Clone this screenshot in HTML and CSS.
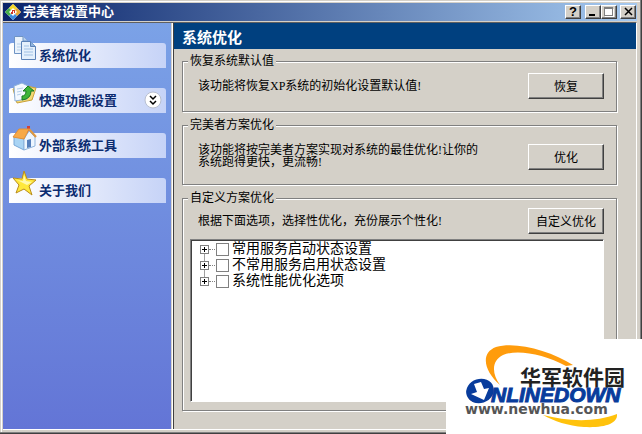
FILE: index.html
```html
<!DOCTYPE html>
<html lang="zh-CN">
<head>
  <meta charset="UTF-8">
  <meta name="viewport" content="width=device-width, initial-scale=1.0">
  <title>完美者设置中心</title>
  <link rel="stylesheet" href="styles.css">
</head>
<body>
  <div class="window">
    <header class="titlebar">
      <svg class="app-icon" width="16" height="16" viewBox="0 0 16 16">
        <path d="M8 0L16 8L8 16L0 8Z" fill="#fff"/>
        <path d="M8 0L12 4L10 6L8 4L6 6L4 4Z" fill="#f4d828"/>
        <path d="M12 4L16 8L12 12L10 10L12 8L10 6Z" fill="#e8a838"/>
        <path d="M4 12L6 10L8 12L10 10L12 12L8 16Z" fill="#3c8ce0"/>
        <path d="M4 4L6 6L4 8L6 10L4 12L0 8Z" fill="#48b048"/>
        <path d="M8 5L11 8L8 11L5 8Z" fill="#fff"/>
        <path d="M7 6h3v3h-1v-2h-1v3h-2v-2h1z" fill="#d03828"/>
      </svg>
      <h1>完美者设置中心</h1>
      <div class="window-buttons">
        <button type="button" class="help" aria-label="帮助">?</button>
        <button type="button" aria-label="最小化"><svg width="11" height="10" viewBox="0 0 11 10"><path d="M2 7h6v2h-6z"/></svg></button>
        <button type="button" aria-label="最大化"><svg width="11" height="10" viewBox="0 0 11 10"><path d="M2 2h9v8h-9z" fill="#fff"/><path d="M1 0h9v9h-9zM2 2v6h7v-6z" fill="#808080" fill-rule="evenodd"/></svg></button>
        <button type="button" class="close" aria-label="关闭"><svg width="11" height="10" viewBox="0 0 11 10"><path d="M3 1L10 8M10 1L3 8" stroke="#000" stroke-width="1.500"/></svg></button>
      </div>
    </header>

    <div class="content">
      <nav class="sidebar">
        <a href="#optimize">
          <svg class="icon" width="26" height="26" viewBox="0 0 26 26">
            <path d="M2.500 1.500H11L15.500 6V18.500H2.500Z" fill="#eaf3fc" stroke="#6f94c4"/>
            <path d="M11 1.500V6H15.500" fill="#b9d2ee" stroke="#6f94c4"/>
            <path d="M5 9h6M5 12h5M5 15h5" stroke="#b5cfea"/>
            <path d="M9.500 6.500H18.500L23.500 11.500V24.500H9.500Z" fill="#e4f0fc" stroke="#5b82b8"/>
            <path d="M18.500 6.500V11.500H23.500" fill="#8fb4de" stroke="#5b82b8"/>
            <path d="M12 11h5M12 14h9M12 17h9M12 20h9" stroke="#9fc0e4"/>
          </svg>
          <span>系统优化</span>
        </a>
        <a href="#quick">
          <svg class="icon" width="26" height="26" viewBox="0 0 26 26">
            <path d="M1 9L10 5L24 8L20 20L5 23Z" fill="#f3d874" stroke="#c9a23c"/>
            <path d="M2 6L10 3L16 6L15 19L3 21Z" fill="#f4f9ff" stroke="#8cb0d8"/>
            <path d="M5 9l6-1M5 12l5-1M5 15l4-1" stroke="#b5cfea"/>
            <path d="M10 16Q14 16 14 11H11L16 6L22 11H19Q19 19 10 20Z" fill="#3fb53a" stroke="#187a22"/>
          </svg>
          <span>快速功能设置</span>
          <svg class="chevron" width="18" height="18" viewBox="0 0 18 18">
            <circle cx="9" cy="9" r="8" fill="#fff" stroke="#b8bfd0"/>
            <path d="M6 5L9 8L12 5M6 10L9 13L12 10" fill="none" stroke="#000" stroke-width="1.500"/>
          </svg>
        </a>
        <a href="#tools">
          <svg class="icon" width="26" height="26" viewBox="0 0 26 26">
            <path d="M15 1h3v8h-3z" fill="#d0403a"/>
            <path d="M2 12L8 6L12 15V25L2 20Z" fill="#a9d4f4" stroke="#78a8d8"/>
            <path d="M12 14L17 6L23 12V21L12 25Z" fill="#edf6ff" stroke="#8fb4dc"/>
            <path d="M1 12L7 4L17 4L12 14Z" fill="#f7a947" stroke="#e09038"/>
            <path d="M17 4L24 12" stroke="#e09840" stroke-width="2"/>
            <path d="M15 15l4-1v8l-4 1z" fill="#5680bc"/>
          </svg>
          <span>外部系统工具</span>
        </a>
        <a href="#about">
          <svg class="icon" width="26" height="26" viewBox="0 0 26 26">
            <path d="M12 1L15 9L24 10L17 16L20 25L12 19L4 23L7 15L1 8L10 9Z" fill="#ffe83c" stroke="#b98c1c" stroke-linejoin="round"/>
            <path d="M12 5L14 11L20 12L15 15L9 12L5 10L11 11Z" fill="#fff9b0"/>
          </svg>
          <span>关于我们</span>
        </a>
      </nav>

      <main class="panel">
        <h2>系统优化</h2>
        <form class="groups">
          <fieldset class="restore">
            <legend>恢复系统默认值</legend>
            <div class="row">
              <p>该功能将恢复XP系统的初始化设置默认值!</p>
              <button type="button">恢复</button>
            </div>
          </fieldset>

          <fieldset class="scheme">
            <legend>完美者方案优化</legend>
            <div class="row">
              <p>该功能将按完美者方案实现对系统的最佳优化!让你的<br>系统跑得更快，更流畅!</p>
              <button type="button">优化</button>
            </div>
          </fieldset>

          <fieldset class="custom">
            <legend>自定义方案优化</legend>
            <div class="row">
              <p>根据下面选项，选择性优化，充份展示个性化!</p>
              <button type="button">自定义优化</button>
            </div>
            <ul class="tree">
              <li>
                <button type="button" class="expand" aria-label="展开"></button>
                <input type="checkbox" id="common">
                <label for="common">常用服务启动状态设置</label>
              </li>
              <li>
                <button type="button" class="expand" aria-label="展开"></button>
                <input type="checkbox" id="uncommon">
                <label for="uncommon">不常用服务启用状态设置</label>
              </li>
              <li>
                <button type="button" class="expand" aria-label="展开"></button>
                <input type="checkbox" id="performance">
                <label for="performance">系统性能优化选项</label>
              </li>
            </ul>
          </fieldset>
        </form>
      </main>
    </div>
  </div>

  <!-- site badge, sits over the window corner -->
  <div class="badge">
    <svg width="196" height="95" viewBox="0 0 196 95">
      <path d="M54 46C38 32 34 14 50 8C70 2 105 12 127 26L120 27C98 15 71 10 57 16C45 22 46 35 54 46Z" fill="#ff9c0c"/>
      <path d="M97 76C120 82 148 84 171 75C172 85 158 89 138 88C122 87 108 82 97 76Z" fill="#ffc20c"/>
      <text class="badge-name" x="74" y="46">华军软件园</text>
      <text class="badge-brand" x="21" y="63"><tspan class="cap">O</tspan><tspan x="45">NLINEDOWN</tspan></text>
      <ellipse cx="34" cy="52" rx="14" ry="12" fill="#083c9c" transform="rotate(-18 34 52)"/>
      <path d="M28 45L35 43L38 50L43 49L38 61L25 55L31 53Z" fill="#fff"/>
      <text class="badge-url" x="19" y="75">www.newhua.com</text>
    </svg>
  </div>
</body>
</html>
```

FILE: styles.css
```css
* {
  box-sizing: border-box;
}

body {
  margin: 0;
  font-family: "Liberation Serif", "Noto Sans CJK SC", serif;
  font-size: 12px;
  color: #000;
  background: #d4d0c8;
}

h1, h2, p, ul {
  margin: 0;
  padding: 0;
}

button {
  font: inherit;
  padding: 0;
  color: #000;
  background: #d4d0c8;
  border: 1px solid;
  border-color: #fff #404040 #404040 #fff;
  box-shadow: inset -1px -1px 0 #808080;
}

.window {
  display: flex;
  flex-direction: column;
  min-height: 100vh;
  padding: 3px 5px 4px 3px;
  box-shadow: inset -1px -1px 0 #404040, inset -2px -2px 0 #808080, inset 1px 1px 0 #d4d0c8, inset 2px 2px 0 #fff;
}

.titlebar {
  display: flex;
  align-items: center;
  height: 18px;
  padding: 0 1px 0 2px;
  background: linear-gradient(to right, #0a246a, #a6caf0);
}

.titlebar h1 {
  flex: 1;
  margin-left: 2px;
  font-size: 13px;
  line-height: 18px;
  color: #fff;
}

.window-buttons {
  display: flex;
}

.window-buttons button {
  width: 16px;
  height: 14px;
  line-height: 12px;
}

.window-buttons svg {
  display: block;
  margin: 1px;
}

.window-buttons .help {
  margin-right: 4px;
  font-family: "Liberation Sans", sans-serif;
  font-weight: bold;
  font-size: 13px;
}

.window-buttons .close {
  margin-left: 3px;
}

.content {
  flex: 1;
  display: flex;
  margin-top: 1px;
  border-top: 1px solid #606060;
  border-right: 1px solid #fff;
  border-bottom: 1px solid #fff;
}

.sidebar {
  display: flex;
  flex-direction: column;
  gap: 20px;
  width: 168px;
  padding: 20px 5px 0 6px;
  background: linear-gradient(#7ba2e7, #6375d6);
}

.sidebar a {
  display: flex;
  height: 25px;
  padding: 0 4px 0 3px;
  border-radius: 3px 3px 0 0;
  background: linear-gradient(to right, #fff, #c6d3f7);
  color: #0c2c70;
  font-size: 13px;
  font-weight: bold;
  line-height: 25px;
  text-decoration: none;
}

.sidebar span {
  flex: 1;
}

.icon {
  margin: -8px 1px 0 0;
}

.chevron {
  margin-top: 3px;
}

.panel {
  flex: 1;
  display: flex;
  flex-direction: column;
  margin-left: 2px;
  border-left: 1px solid #404040;
  box-shadow: -1px 0 0 #fff;
}

.panel h2 {
  padding-left: 8px;
  height: 26px;
  font-size: 15px;
  line-height: 30px;
  color: #fff;
  background: #00407f;
}

.groups {
  flex: 1;
  display: flex;
  flex-direction: column;
  gap: 6px;
  padding: 5px 19px 18px 8px;
}

fieldset {
  min-width: 0;
  margin: 0;
  padding: 5px 12px 12px 7px;
  border: 1px solid #808080;
  box-shadow: 1px 1px 0 #fff, inset 1px 1px 0 #fff;
}

legend {
  margin-left: -2px;
  padding: 0 2px;
  line-height: 14px;
  background: #d4d0c8;
}

.row {
  display: flex;
  justify-content: space-between;
  align-items: center;
}

.row p {
  padding-left: 8px;
  line-height: 12px;
}

.row button {
  width: 76px;
  height: 26px;
}

.scheme {
  padding-top: 12px;
  padding-bottom: 14px;
}

.scheme .row {
  align-items: flex-start;
}

.custom {
  flex: 1;
  display: flex;
  flex-direction: column;
  padding-top: 3px;
  padding-bottom: 8px;
}

.tree {
  flex: 1;
  margin-top: 5px;
  padding: 1px 0 0 8px;
  border: 1px solid;
  border-color: #808080 #fff #fff #808080;
  box-shadow: inset 1px 1px 0 #404040;
  background: #fff;
  list-style: none;
}

.tree li {
  display: flex;
  align-items: center;
  height: 16px;
  background: linear-gradient(#a0a0a0, #a0a0a0) 5px 0 / 1px 100% no-repeat;
}

.tree li:first-child {
  background-position: 5px 8px;
}

.tree li:last-child {
  background-size: 1px 8px;
}

.tree label {
  margin-left: 3px;
  font-size: 14px;
  line-height: 16px;
}

.tree .expand {
  width: 9px;
  height: 9px;
  margin-left: 1px;
  border: 1px solid #808080;
  box-shadow: none;
  background:
    linear-gradient(#000, #000) center / 5px 1px no-repeat,
    linear-gradient(#000, #000) center / 1px 5px no-repeat,
    #fff;
}

/* dotted branch between the plus box and the tick box */
.tree .expand::after {
  content: "";
  display: block;
  width: 6px;
  margin-left: 8px;
  border-top: 1px dotted #808080;
}

.tree input {
  appearance: none;
  width: 13px;
  height: 13px;
  margin: 0 0 0 7px;
  border: 1px solid #808080;
  background: #fff;
}

.badge {
  position: absolute;
  right: 0;
  bottom: 0;
  width: 196px;
  height: 95px;
  background: #fff;
}

.badge svg {
  display: block;
}

.badge-name {
  font: bold 21px "Noto Sans CJK SC", sans-serif;
  fill: #222;
}

.badge-brand {
  font: italic bold 21px "Liberation Sans", sans-serif;
  fill: #083c9c;
  stroke: #083c9c;
}

.badge-brand .cap {
  font-size: 28px;
}

.badge-url {
  font: bold 14px "DejaVu Sans", sans-serif;
  fill: #555;
}
```
